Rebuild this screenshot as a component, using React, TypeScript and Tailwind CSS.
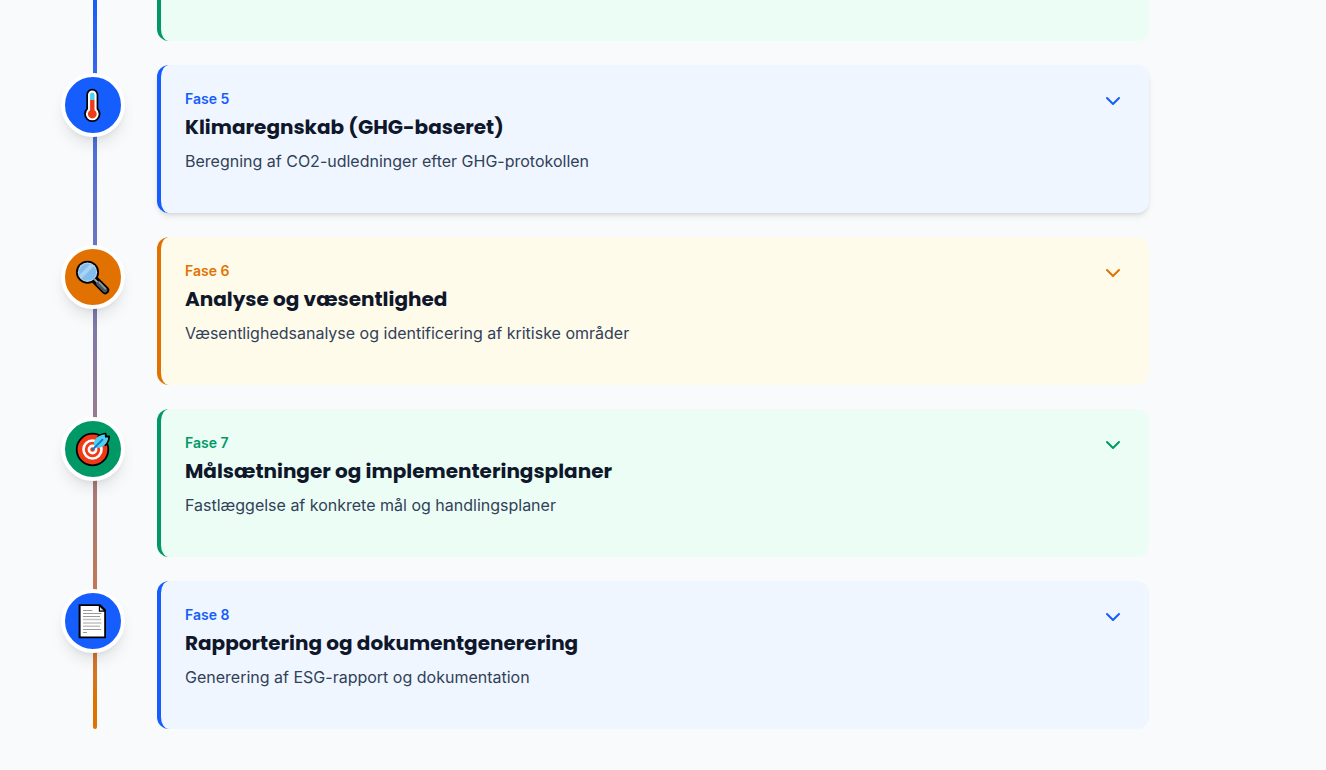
import type { ReactNode } from "react";
import { ChevronDown } from "lucide-react";

interface Phase {
  id: number;
  title: string;
  description: string;
  icon: ReactNode;
  circle: string;
  card: string;
  accent: string;
}

const ThermometerIcon = () => (
  <svg viewBox="0 0 40 40" className="size-10" aria-hidden="true">
    <path
      d="M19.3 3.7a6 6 0 0 0-6 6v13.6a8.2 8.2 0 1 0 12 0V9.7a6 6 0 0 0-6-6z"
      fill="#000"
    />
    <path
      d="M19.3 5.5a4.3 4.3 0 0 0-4.3 4.3v14.4a6.4 6.4 0 1 0 8.6 0V9.8a4.3 4.3 0 0 0-4.3-4.3z"
      fill="#fff"
    />
    <path d="M17.1 15V9.8a2.2 2.2 0 0 1 4.4 0V15z" fill="#4fd0ef" />
    <path
      d="M17.1 15h4.4v10.2a4.4 4.4 0 1 1-4.4 0z"
      fill="#f03a17"
    />
  </svg>
);

const MagnifierIcon = () => (
  <svg viewBox="0 0 40 40" className="size-10" aria-hidden="true">
    <path d="M22 23l10.2 10.2" stroke="#000" strokeWidth="8" strokeLinecap="round" />
    <path d="M25.6 26.6l6.4 6.4" stroke="#4c565d" strokeWidth="4.8" strokeLinecap="round" />
    <path d="M26.2 25.4l6.2 6.2" stroke="#8f989e" strokeWidth="1.6" strokeLinecap="round" />
    <circle cx="14.5" cy="15.2" r="11.5" fill="#000" />
    <path d="M21.4 22.1l3 3" stroke="#a4abb0" strokeWidth="2" />
    <circle cx="14.5" cy="15.2" r="9.7" fill="#b9d9ef" />
    <circle cx="14.5" cy="15.2" r="8.6" fill="#82bdec" />
    <path d="M6.4 18L17.4 7.1a8.6 8.6 0 0 1 3.4 2.2L8.6 21.5A8.6 8.6 0 0 1 6.4 18z" fill="#a9d3f3" />
  </svg>
);

const TargetIcon = () => (
  <svg viewBox="0 0 40 40" className="size-10" aria-hidden="true">
    <circle cx="19.5" cy="20.5" r="16.7" fill="#000" />
    <circle cx="19.5" cy="20.5" r="14.9" fill="#f03a17" />
    <circle cx="19.5" cy="20.5" r="9" fill="none" stroke="#fff" strokeWidth="2.6" />
    <circle cx="19.5" cy="20.5" r="3.6" fill="none" stroke="#fff" strokeWidth="2.6" />
    <path
      d="M24 7.6c2-2 5-3.8 9-3.9l1 2.7 3 .3c.2 4-1.2 7.6-4.6 10.8z"
      fill="#000"
    />
    <path
      d="M21.8 18.4c-1.8-3.6-1-7.4 2.2-10 2.2-1.6 4.8-2.6 7.8-3.2l.2 3.4 3.2-.2c-.2 3.2-1.6 5.8-4 7.8-2.6 2.4-6 3.2-9.4 2.2z"
      fill="#4fd0ef"
    />
    <path d="M19.3 21L30 10.2" stroke="#1479d4" strokeWidth="1.9" />
  </svg>
);

const DocumentIcon = () => (
  <svg viewBox="0 0 40 40" className="size-10" aria-hidden="true">
    <path d="M5.6 3.2h21.8L33 8.8v28.5H5.6z" fill="#000" />
    <path d="M7.6 5.1h18.2v5.6h5.4v24.7H7.6z" fill="#fff" />
    <path d="M27 6l3.6 3.6H27z" fill="#d6d6d6" />
    <g stroke="#9a9a9a" strokeWidth="1">
      <path d="M10 9.5h9.4M10 12.5h18.4M10 15.5h17" />
      <path d="M10 28.5h18M10 31.5h4" />
    </g>
    <g stroke="#c2c2c2" strokeWidth="1.5">
      <path d="M10 18.5h18M10 22h18.4M10 25.3h17" />
    </g>
  </svg>
);

const phases: Phase[] = [
  {
    id: 5,
    title: "Klimaregnskab (GHG-baseret)",
    description: "Beregning af CO2-udledninger efter GHG-protokollen",
    icon: <ThermometerIcon />,
    circle: "bg-blue-600",
    card: "border-blue-600 bg-blue-50 shadow-md",
    accent: "text-blue-600",
  },
  {
    id: 6,
    title: "Analyse og væsentlighed",
    description: "Væsentlighedsanalyse og identificering af kritiske områder",
    icon: <MagnifierIcon />,
    circle: "bg-amber-600",
    card: "border-amber-600 bg-amber-50",
    accent: "text-amber-600",
  },
  {
    id: 7,
    title: "Målsætninger og implementeringsplaner",
    description: "Fastlæggelse af konkrete mål og handlingsplaner",
    icon: <TargetIcon />,
    circle: "bg-emerald-600",
    card: "border-emerald-600 bg-emerald-50",
    accent: "text-emerald-600",
  },
  {
    id: 8,
    title: "Rapportering og dokumentgenerering",
    description: "Generering af ESG-rapport og dokumentation",
    icon: <DocumentIcon />,
    circle: "bg-blue-600",
    card: "border-blue-600 bg-blue-50",
    accent: "text-blue-600",
  },
];

export default function App() {
  return (
    <main className="min-h-screen bg-slate-50 px-[61px] pb-10 font-['Inter',sans-serif]">
      <div className="relative max-w-[1088px]">
        {/* Tidslinje */}
        <div className="absolute inset-y-0 left-8 w-1 rounded-b-full bg-linear-to-b from-blue-600 to-amber-600" />

        <div className="ml-24 h-[41px] rounded-b-xl border-l-4 border-emerald-600 bg-emerald-50" />

        <ol className="mt-6 flex flex-col gap-6">
          {phases.map((phase) => (
            <li key={phase.id} className="flex gap-8">
              <div
                className={`relative mt-2 flex size-16 shrink-0 items-center justify-center rounded-full border-4 border-white shadow-lg ${phase.circle}`}
              >
                {phase.icon}
              </div>

              <article
                className={`flex min-w-0 flex-1 items-start justify-between gap-4 rounded-xl border-l-4 p-6 pb-10 ${phase.card}`}
              >
                <div>
                  <p className={`mb-1 text-sm font-semibold ${phase.accent}`}>
                    Fase {phase.id}
                  </p>
                  <h3 className="mb-2 font-['Poppins','Inter',sans-serif] text-xl font-bold text-slate-900">
                    {phase.title}
                  </h3>
                  <p className="text-base text-slate-700">
                    {phase.description}
                  </p>
                </div>
                <button
                  type="button"
                  aria-label={`Vis fase ${phase.id}`}
                  className={phase.accent}
                >
                  <ChevronDown className="size-6" />
                </button>
              </article>
            </li>
          ))}
        </ol>
      </div>
    </main>
  );
}
